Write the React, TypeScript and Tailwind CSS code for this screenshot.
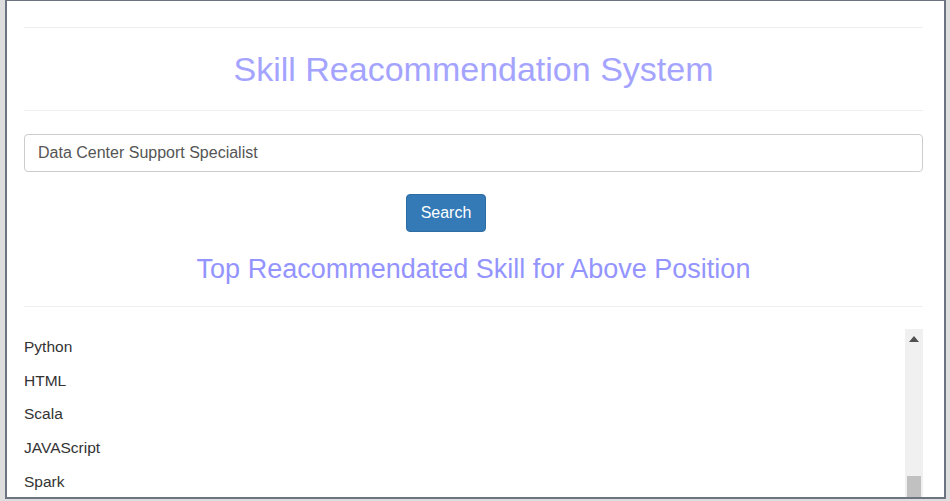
import React from "react";

const skills = ["Python", "HTML", "Scala", "JAVAScript", "Spark"];

const App = (): JSX.Element => {
  return (
    <div className="w-[950px] h-[501px] bg-[#dedede] pl-[5px] pr-[4px] pb-[2px] overflow-hidden [font-family:'Liberation_Sans',Arial,sans-serif]">
      <div className="h-full bg-white border-x-2 border-b-2 border-t border-[#6b7480] pl-[17px] pr-[21px] pt-[26px] overflow-hidden">
        <hr className="border-t border-[#eeeeee]" />
        <h1 className="text-center text-[34px] leading-[40px] text-[#a4a4ff] mt-[21px] mb-[21px]">
          Skill Reacommendation System
        </h1>
        <hr className="border-t border-[#eeeeee]" />

        <input
          className="mt-[23px] block w-full h-[38px] border border-[#cccccc] rounded-[4px] px-[13px] text-[16px] text-[#555555] outline-none"
          defaultValue="Data Center Support Specialist"
        />

        <div className="flex pl-[382px] mt-[22px]">
          <button className="w-[80px] h-[38px] bg-[#337ab7] text-white text-[16px] rounded-[4px] border border-[#2e6da4]">
            Search
          </button>
        </div>

        <h3 className="text-center text-[27px] leading-[30px] text-[#9494ff] mt-[22px]">
          Top Reacommendated Skill for Above Position
        </h3>
        <hr className="border-t border-[#eeeeee] mt-[22px]" />

        {/* list with its own scrollbar */}
        <div className="flex mt-[22px] h-[200px]">
          <ul className="flex-1 pt-[8px] text-[15.5px] text-[#333333]">
            {skills.map((s, i) => (
              <li key={i} className="h-[33.7px] leading-[20px]">
                {s}
              </li>
            ))}
          </ul>
          <div className="w-[18px] bg-[#f0f0f0] flex flex-col items-center">
            <svg width="10" height="6" viewBox="0 0 10 6" className="mt-[7px]">
              <path d="M5 0 L10 6 L0 6 Z" fill="#505050" />
            </svg>
            <div className="mt-[134px] w-[14px] h-[21px] bg-[#c1c1c1]" />
          </div>
        </div>
      </div>
    </div>
  );
};

export default App;
